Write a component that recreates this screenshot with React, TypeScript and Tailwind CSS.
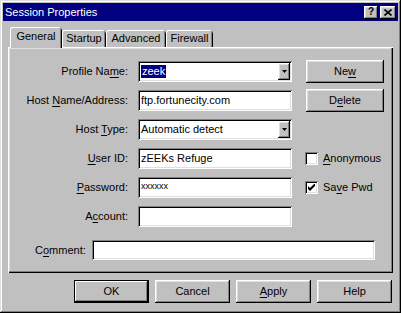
import React from 'react';

const raised =
  'shadow-[inset_-1px_-1px_#000,inset_1px_1px_#fff,inset_-2px_-2px_#808080,inset_2px_2px_#dfdfdf]';
const sunken =
  'shadow-[inset_1px_1px_#808080,inset_-1px_-1px_#fff,inset_2px_2px_#000,inset_-2px_-2px_#dfdfdf]';

function U({ children }: { children: React.ReactNode }) {
  return <span className="underline underline-offset-[2px]">{children}</span>;
}

function DropArrow() {
  return (
    <div className={`w-[12px] h-full bg-[#c0c0c0] flex items-center justify-center ${raised}`}>
      <svg width="5" height="3" viewBox="0 0 5 3">
        <path d="M0 0h5L2.5 3z" fill="#000" />
      </svg>
    </div>
  );
}

function Field({ children, combo }: { children?: React.ReactNode; combo?: boolean }) {
  return (
    <div className={`w-[154px] h-[21px] bg-white flex items-stretch p-[2px] ${sunken}`}>
      <div className="flex-1 flex items-center pl-[1px] overflow-hidden whitespace-nowrap">{children}</div>
      {combo && <DropArrow />}
    </div>
  );
}

function Button({ children, w = 'w-[78px]', def }: { children: React.ReactNode; w?: string; def?: boolean }) {
  return (
    <div
      className={`${w} h-[23px] shrink-0 flex items-center justify-center bg-[#c0c0c0] ${
        def
          ? 'shadow-[inset_0_0_0_1px_#000,inset_-2px_-2px_#000,inset_2px_2px_#fff,inset_-3px_-3px_#808080]'
          : raised
      }`}
    >
      {children}
    </div>
  );
}

function Check({ checked, children }: { checked?: boolean; children: React.ReactNode }) {
  return (
    <div className="flex items-center ml-[13px]">
      <div className={`w-[13px] h-[13px] bg-white flex items-center justify-center ${sunken}`}>
        {checked && (
          <svg width="7" height="7" viewBox="0 0 7 7">
            <path d="M0 2v3l2 2 5-5V-1L2 4z" fill="#000" />
          </svg>
        )}
      </div>
      <span className="ml-[5px]">{children}</span>
    </div>
  );
}

function Row({ label, children }: { label: React.ReactNode; children: React.ReactNode }) {
  return (
    <div className="h-[21px] flex items-center">
      <div className="w-[120px] text-right">{label}</div>
      <div className="ml-[10px] flex items-center">{children}</div>
    </div>
  );
}

function Tab({ label, active, w }: { label: string; active?: boolean; w: string }) {
  return (
    <div
      className={`${w} flex items-center justify-center rounded-t-[3px] bg-[#c0c0c0] ${
        active
          ? 'h-[21px] relative z-10 ml-[2px] pb-[2px] shadow-[inset_1px_0_#fff,inset_0_1px_#fff,inset_-1px_0_#000,inset_-2px_0_#808080]'
          : 'h-[17px] mb-[1px] shadow-[inset_1px_0_#fff,inset_0_1px_#fff,inset_-1px_0_#000,inset_-2px_0_#808080]'
      }`}
    >
      {label}
    </div>
  );
}

export default function App() {
  return (
    <div
      className="w-[401px] h-[313px] bg-[#c0c0c0] p-[3px] flex flex-col text-[11px] text-black leading-none shadow-[inset_-1px_-1px_#000,inset_1px_1px_#dfdfdf,inset_-2px_-2px_#808080,inset_2px_2px_#fff]"
      style={{ fontFamily: '"Liberation Sans", Arial, sans-serif' }}
    >
      <div className="h-[18px] bg-[#000080] flex items-center justify-between pl-[2px] pr-[2px]">
        <span className="text-white text-[11px]">Session Properties</span>
        <div className="flex gap-[2px]">
          <div className={`w-[14px] h-[13px] bg-[#c0c0c0] flex items-center justify-center font-bold text-[10px] ${raised}`}>
            ?
          </div>
          <div className={`w-[16px] h-[13px] bg-[#c0c0c0] flex items-center justify-center ${raised}`}>
            <svg width="8" height="7" viewBox="0 0 8 7">
              <path d="M0.5 0.5l7 6M7.5 0.5l-7 6" stroke="#000" strokeWidth="1.6" />
            </svg>
          </div>
        </div>
      </div>

      <div className="px-[5px] flex flex-col">
        <div className="mt-[6px] h-[21px] flex items-end">
          <Tab label="General" active w="w-[52px]" />
          <Tab label="Startup" w="w-[44px]" />
          <Tab label="Advanced" w="w-[60px]" />
          <Tab label="Firewall" w="w-[47px]" />
        </div>

        <div className="-mt-[1px] h-[226px] flex flex-col pt-[14px] bg-[#c0c0c0] shadow-[inset_1px_1px_#fff,inset_-1px_-1px_#000,inset_-2px_-2px_#808080,inset_2px_2px_#dfdfdf]">
          <div className="flex flex-col gap-[8px]">
            <Row label={<>Profile Na<U>m</U>e:</>}>
              <Field combo>
                <span className="bg-[#000080] text-white px-[1px] py-[1px]">zeek</span>
              </Field>
              <div className="ml-[14px]">
                <Button>
                  Ne<U>w</U>
                </Button>
              </div>
            </Row>
            <Row label={<>Host <U>N</U>ame/Address:</>}>
              <Field>ftp.fortunecity.com</Field>
              <div className="ml-[14px]">
                <Button>
                  D<U>e</U>lete
                </Button>
              </div>
            </Row>
            <Row label={<>Host <U>T</U>ype:</>}>
              <Field combo>Automatic detect</Field>
            </Row>
            <Row label={<><U>U</U>ser ID:</>}>
              <Field>zEEKs Refuge</Field>
              <Check>
                <U>A</U>nonymous
              </Check>
            </Row>
            <Row label={<><U>P</U>assword:</>}>
              <Field>
                <span className="text-[9px] -mt-[2px]">xxxxxx</span>
              </Field>
              <Check checked>
                Sa<U>v</U>e Pwd
              </Check>
            </Row>
            <Row label={<>A<U>c</U>count:</>}>
              <Field />
            </Row>
          </div>

          <div className="mt-[13px] h-[20px] flex items-center">
            <div className="w-[84px] pl-[27px]">
              C<U>o</U>mment:
            </div>
            <div className={`w-[283px] h-[20px] bg-white ${sunken}`} />
          </div>
        </div>

        <div className="mt-[7px] flex justify-end gap-[6px] pr-[1px]">
          <Button w="w-[75px]" def>
            OK
          </Button>
          <Button w="w-[75px]">Cancel</Button>
          <Button w="w-[75px]">
            <U>A</U>pply
          </Button>
          <Button w="w-[75px]">Help</Button>
        </div>
      </div>
    </div>
  );
}
